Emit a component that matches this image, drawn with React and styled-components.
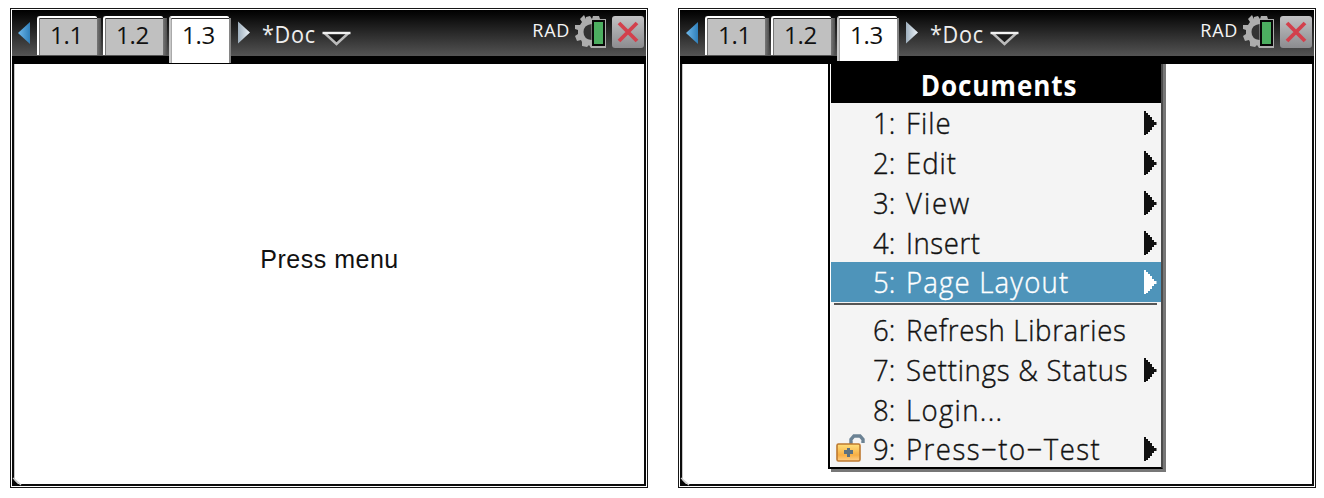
import React from "react";
import styled, { createGlobalStyle } from "styled-components";

const GlobalStyle = createGlobalStyle`
  body { margin: 0; background: #fff; font-family: "Open Sans", "Noto Sans", sans-serif; }
  * { box-sizing: border-box; }
`;

const Page = styled.main`
  display: flex;
  gap: 30px;
  width: 1324px;
  height: 498px;
  padding: 8px 0 0 10px;
  overflow: hidden;
`;

const Frame = styled.section`
  flex: none;
  width: 638px;
  height: 480px;
  border: 1px solid #161616;
  padding: 1px;
`;

const Screen = styled.div`
  position: relative;
  height: 100%;
  display: flex;
  flex-direction: column;
  background: #fff;
  border: solid #0c0c0c;
  border-width: 0 2px 2px;
`;

const Toolbar = styled.header`
  flex: none;
  display: flex;
  height: 54px;
  margin: 0 -2px;
  padding-left: 6px;
  border-bottom: 8px solid #000;
  background: linear-gradient(#000 0, #0c0c0c 15%, #545454 100%);
`;

const Arrow = styled.svg`
  flex: none;
  width: 12px;
  height: 23px;
  margin: 11px ${(p) => p.$after}px 0 ${(p) => p.$before || 0}px;
`;

const Tab = styled.div`
  flex: none;
  display: flex;
  width: 66px;
  height: ${(p) => (p.$active ? (p.$covered ? 45 : 47) : 39)}px;
  margin-top: 6px;
`;

const TabFace = styled.div`
  width: 60px;
  height: 100%;
  padding-left: 11px;
  border-top: 2px solid #fff;
  border-left: 2px solid ${(p) => (p.$active ? "#c8c8c8" : "#fff")};
  border-radius: 3px 2px 0 0;
  background: ${(p) => (p.$active ? "#fff" : "#c0c0c0")};
  box-shadow: inset 0 1px 0 #333, inset 1px 0 0 ${(p) => (p.$active ? "#aaa" : "#777")};
  color: #111;
  font: 24px/34px "Open Sans", "Noto Sans", sans-serif;
  letter-spacing: -0.3px;
`;

const TabEdge = styled.div`
  width: ${(p) => (p.$active ? 2 : 4)}px;
  height: ${(p) => (p.$active ? (p.$covered ? 43 : 45) : 37)}px;
  margin-top: 2px;
  background: ${(p) => (p.$active ? "#858585" : "linear-gradient(90deg, #777, #505050)")};
`;

const DocName = styled.div`
  width: 56px;
  margin: 7px 4px 0 0;
  color: #eee;
  font: 24px/34px "Open Sans", "Noto Sans", sans-serif;
  letter-spacing: 0.8px;
  white-space: nowrap;
  transform: scaleX(0.9);
  transform-origin: left;
`;

const Chevron = styled.svg`
  flex: none;
  width: 30px;
  height: 16px;
  margin-top: 20px;
`;

const Status = styled.div`
  display: flex;
  margin-left: auto;
  padding: 5px 2px 0 0;
`;

const Mode = styled.div`
  margin: 1px 5px 0 0;
  color: #f4f4f4;
  font: 500 18px/28px "Open Sans", "Noto Sans", sans-serif;
  letter-spacing: 0.7px;
`;

const Gear = styled.svg`
  width: 32px;
  height: 33px;
`;

const Close = styled.svg`
  width: 32px;
  height: 33px;
  margin-left: 5px;
`;

const Content = styled.div`
  flex: 1;
  display: flex;
  justify-content: center;
  border: solid #c8c8c8;
  border-width: 0 0 0 1px;
  padding-top: 179px;
  color: #111;
  font: 25px/32px "Liberation Sans", sans-serif;
  letter-spacing: 0.5px;
`;

const Corner = styled.svg`
  position: absolute;
  left: -2px;
  bottom: -2px;
  width: 10px;
  height: 10px;
`;

const Menu = styled.nav`
  position: absolute;
  left: 146px;
  top: 54px;
  width: 335px;
  height: 405px;
  padding: 0 0 0 1px;
  background: #f4f4f4;
  border: solid #000;
  border-width: 0 2px 2px 2px;
  border-right-color: #4c4c4c;
  box-shadow: inset 1px 0 #fff, 3px 0 0 #777, 3px 3px 0 #777;
`;

const Title = styled.div`
  height: 39px;
  background: #000;
  color: #fff;
  text-align: center;
  font: bold 29px/41px "Open Sans", "Noto Sans", sans-serif;
  letter-spacing: 1px;
  span { display: inline-block; transform: translateX(3px) scaleX(0.9); }
`;

const Item = styled.div`
  display: flex;
  height: 39.75px;
  align-items: center;
  padding: 1px 4px 0 0;
  background: ${(p) => (p.$selected ? "#4e94ba" : "transparent")};
  color: ${(p) => (p.$selected ? "#fff" : "#111")};
  font: 300 29px/38px "Open Sans", "Noto Sans", sans-serif;
  -webkit-text-stroke: 0.4px currentColor;
`;

const IconSlot = styled.div`
  width: 42px;
  height: 30px;
  padding-left: 5px;
  svg { display: block; margin-top: -1px; }
`;

const Number = styled.span`
  width: 33px;
  transform: scaleX(0.95);
  transform-origin: left;
`;

const Label = styled.span`
  flex: 1;
  white-space: nowrap;
  letter-spacing: ${(p) => p.$tracking}px;
  transform: scaleX(0.95);
  transform-origin: left;
`;

const Submenu = styled.svg`
  flex: none;
  width: 13px;
  height: 24px;
`;

const Divider = styled.hr`
  height: 2px;
  margin: 1px 4px 5px 3px;
  border: 0;
  background: #555;
`;

const items = [
  { n: 1, label: "File", sub: true, tracking: 1.1 },
  { n: 2, label: "Edit", sub: true, tracking: 1 },
  { n: 3, label: "View", sub: true, tracking: 2.1 },
  { n: 4, label: "Insert", sub: true, tracking: 0.6 },
  { n: 5, label: "Page Layout", sub: true, selected: true, tracking: 1.25 },
  { divider: true },
  { n: 6, label: "Refresh Libraries", tracking: 0.72 },
  { n: 7, label: "Settings & Status", sub: true, tracking: 0.8 },
  { n: 8, label: "Login...", tracking: 1.4 },
  { n: 9, label: "Press−to−Test", sub: true, lock: true, tracking: 1.55 },
];

function Padlock() {
  return (
    <svg width="29" height="30" viewBox="0 0 29 30">
      <path d="M15 11V6.5L18 3h6l3 3.500V10" fill="none" stroke="#6b8294" strokeWidth="3.4" />
      <defs>
        <linearGradient id="brass" x2="0" y2="1">
          <stop stopColor="#ffe07c" />
          <stop offset=".65" stopColor="#f7ae45" />
          <stop offset="1" stopColor="#ffd08a" />
        </linearGradient>
      </defs>
      <rect x="1" y="11" width="23" height="17" rx="1.5" fill="url(#brass)" stroke="#bd7930" strokeWidth="1.6" />
      <path d="M11 15h3v2h3v4h-3v3h-3v-3H8v-4h3z" fill="#5c7180" />
    </svg>
  );
}

function Bar({ covered }) {
  return (
    <Toolbar>
      <Arrow viewBox="0 0 12 23" $after={7}>
        <defs>
          <linearGradient id="blue">
            <stop stopColor="#6fb8ea" />
            <stop offset="1" stopColor="#2f7fba" />
          </linearGradient>
          <linearGradient id="silver">
            <stop stopColor="#9fb0be" />
            <stop offset="1" stopColor="#edf3f8" />
          </linearGradient>
        </defs>
        <path d="M0 12L12 1v22z" fill="url(#blue)" />
      </Arrow>
      {["1.1", "1.2", "1.3"].map((name, i) => (
        <Tab key={name} $active={i === 2} $covered={covered}>
          <TabFace $active={i === 2}>{name}</TabFace>
          <TabEdge $active={i === 2} $covered={covered} />
        </Tab>
      ))}
      <Arrow viewBox="0 0 12 23" $before={3} $after={12}>
        <path d="M0 0.500L12 11.500 0 22.500z" fill="url(#silver)" />
      </Arrow>
      <DocName>*Doc</DocName>
      <Chevron viewBox="0 0 30 16">
        <path d="M2.500 3h24L14.500 14z" fill="#1b1b1b" />
        <path d="M2.500 3L14.500 14l12-11" fill="none" stroke="#bbb" strokeWidth="2.4" />
        <path d="M0.500 3h28" stroke="#f2f2f2" strokeWidth="2.4" />
      </Chevron>
      <Status>
        <Mode>RAD</Mode>
        <Gear viewBox="0 0 32 33">
          <path
            d="M11 4l0-2 4-1 2 3 1-3h6l1 3h6v29H16l-2-3-2 2-5-1 0-4-1-2-4 1-2-5 3-2v-4l-3-1 0-4 5 0 2-3-2-3 4-4z"
            fill="#adadad"
          />
          <path d="M16.500 9v16q-8-1-8-8t8-8z" fill="#333" />
          <rect x="17" y="5" width="13" height="26" fill="#080808" />
          <rect x="19" y="7" width="9" height="22" fill="#4cae60" />
        </Gear>
        <Close viewBox="0 0 32 33">
          <defs>
            <linearGradient id="plate" x2="0" y2="1">
              <stop stopColor="#c2c2c4" />
              <stop offset="1" stopColor="#8c8c8f" />
            </linearGradient>
          </defs>
          <rect x="0" y="1" width="32" height="32" rx="3" fill="url(#plate)" />
          <path d="M7 8l18 18M25 8L7 26" stroke="#d3404c" strokeWidth="3.8" />
        </Close>
      </Status>
    </Toolbar>
  );
}

function Calculator({ children, message, covered }) {
  return (
    <Frame>
      <Screen>
        <Bar covered={covered} />
        <Content>{message}</Content>
        <Corner viewBox="0 0 10 10">
          <path d="M0 2l8 8H0z" fill="#080808" />
          <path d="M1 2l8 7" stroke="#ccc" strokeWidth="1.3" />
        </Corner>
        {children}
      </Screen>
    </Frame>
  );
}

export default function App() {
  return (
    <>
      <GlobalStyle />
      <Page>
        <Calculator message="Press menu" />
        <Calculator covered>
          <Menu>
            <Title><span>Documents</span></Title>
            {items.map((it) =>
              it.divider ? (
                <Divider key="divider" />
              ) : (
                <Item key={it.n} $selected={it.selected}>
                  <IconSlot>{it.lock && <Padlock />}</IconSlot>
                  <Number>{it.n}:</Number>
                  <Label $tracking={it.tracking}>{it.label}</Label>
                  {it.sub && (
                    <Submenu viewBox="0 0 13 24">
                      <path
                        d="M0 0h2v2h2v2h2v2h2v3h2v2h2.500v3H10v2H8v3H6v2H4v2H2v2H0z"
                        fill="currentColor"
                      />
                    </Submenu>
                  )}
                </Item>
              )
            )}
          </Menu>
        </Calculator>
      </Page>
    </>
  );
}
